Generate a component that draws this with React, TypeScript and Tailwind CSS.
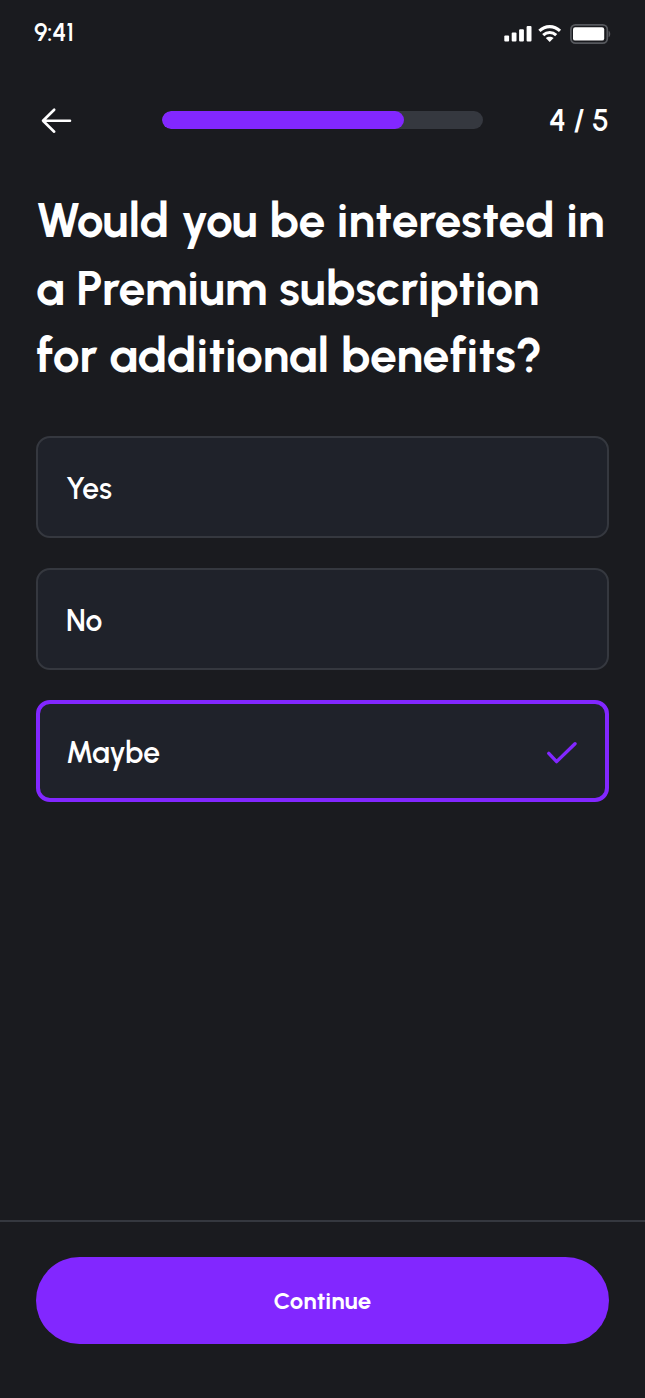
const titleLines = [
  "Would you be interested in",
  "a Premium subscription",
  "for additional benefits?",
];

const options = [
  { label: "Yes", selected: false },
  { label: "No", selected: false },
  { label: "Maybe", selected: true },
];

function SignalIcon() {
  return (
    <svg width="29" height="18" viewBox="0 0 29 18" fill="#fff">
      <rect x="0.3" y="10.5" width="4.8" height="6" rx="1" />
      <rect x="7.7" y="7.5" width="4.8" height="9" rx="1" />
      <rect x="15.1" y="4.3" width="4.8" height="12.2" rx="1" />
      <rect x="22.6" y="1" width="4.9" height="15.5" rx="1" />
    </svg>
  );
}

function WifiIcon() {
  return (
    <svg width="24" height="18" viewBox="0 0 24 18" fill="none" stroke="#fff" strokeWidth="3.1">
      <path d="M1.4 5.9C7.3 0.2 16.1 0.2 22 5.9" />
      <path d="M5.2 10.1C9 6.6 14.4 6.6 18.2 10.1" />
      <path d="M11.7 17L7.8 13.1C10 11.2 13.4 11.2 15.6 13.1Z" fill="#fff" stroke="none" />
    </svg>
  );
}

function BatteryIcon() {
  return (
    <svg width="41" height="20" viewBox="0 0 41 20" fill="none">
      <rect x="0.9" y="0.9" width="36.4" height="18.2" rx="4.5" stroke="#56585d" strokeWidth="1.7" />
      <rect x="3" y="3.2" width="31.2" height="13.4" rx="2.2" fill="#fff" />
      <path d="M38.6 6.8C40.8 7.7 40.8 12.3 38.6 13.2Z" fill="#56585d" />
    </svg>
  );
}

export default function App() {
  return (
    <main className="flex h-[1398px] w-[645px] flex-col bg-[#1a1b1f] font-['Urbanist','Lato',sans-serif] text-white">
      <div className="flex h-[66px] shrink-0 items-center justify-between pr-[34px] pl-[34px]">
        <span className="pb-[2px] text-[25px] leading-none font-semibold tracking-[-0.2px]">9:41</span>
        <div className="flex items-center pt-[2px]">
          <SignalIcon />
          <div className="mr-2 ml-[5px]">
            <WifiIcon />
          </div>
          <BatteryIcon />
        </div>
      </div>

      <header className="flex h-[108px] shrink-0 items-center px-9">
        <button aria-label="Back" className="flex w-[126px] pt-[1px] pl-[5px]">
          <svg width="31" height="28" viewBox="0 0 31 28" fill="none" stroke="#fff" strokeWidth="2.6" strokeLinecap="round" strokeLinejoin="round">
            <path d="M29 13.7H2M13.2 2.7L2 13.7L13.2 24.7" />
          </svg>
        </button>
        <div className="h-[18px] w-[321px] overflow-hidden rounded-full bg-[#35383f]">
          <div className="h-full w-[242px] rounded-full bg-[#8227ff]" />
        </div>
        <span className="ml-auto pt-[2px] text-[30px] leading-none font-semibold">4 / 5</span>
      </header>

      <h1 className="mt-[13px] pl-9 text-[48px] leading-[67.5px] font-bold">
        {titleLines.map((line) => (
          <span key={line} className="block whitespace-nowrap">
            {line}
          </span>
        ))}
      </h1>

      <div className="mt-[46px] flex flex-col gap-[30px] px-9">
        {options.map((option) => (
          <button
            key={option.label}
            className={
              option.selected
                ? "flex h-[102px] items-center justify-between rounded-[14px] border-4 border-[#8227ff] bg-[#1f222a] pt-[4px] pr-7 pl-[26px]"
                : "flex h-[102px] items-center justify-between rounded-[14px] border-[2.5px] border-[#35383f] bg-[#1f222a] px-[28px] pt-[4px]"
            }
          >
            <span className="text-[30px] leading-none font-semibold">{option.label}</span>
            {option.selected && (
              <svg width="30" height="24" viewBox="0 0 30 24" fill="none" stroke="#8227ff" strokeWidth="3.4" strokeLinecap="round" strokeLinejoin="round">
                <path d="M1.8 12.4L9.6 20.6L28 2.7" />
              </svg>
            )}
          </button>
        ))}
      </div>

      <footer className="mt-auto h-[178px] shrink-0 border-t-2 border-[#35383f] px-9 pt-[35px]">
        <button className="flex h-[87px] w-full items-center justify-center rounded-full bg-[#8227ff] pt-[1px] text-[24px] leading-none font-bold tracking-[0.2px]">
          Continue
        </button>
      </footer>
    </main>
  );
}
